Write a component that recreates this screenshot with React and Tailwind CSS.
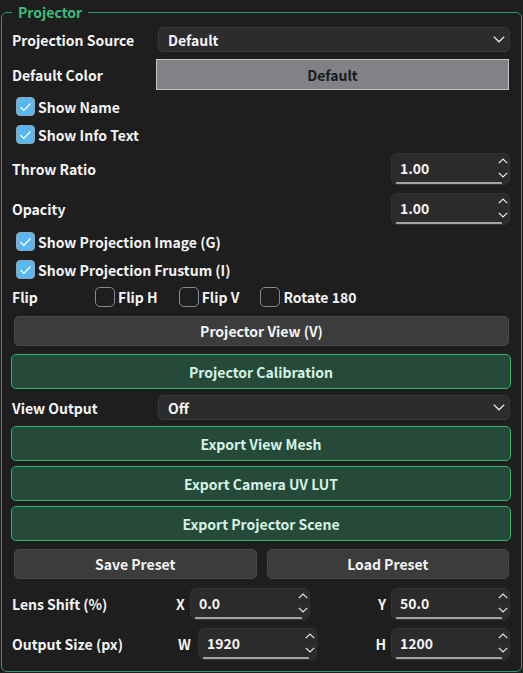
import React from "react";

function Chevron() {
  return (
    <svg width="12" height="7" viewBox="0 0 12 7" className="shrink-0">
      <polyline points="0.8,0.8 6,5.8 11.2,0.8" fill="none" stroke="#dfe6ee" strokeWidth="1.3" />
    </svg>
  );
}

function Combo({ value }) {
  return (
    <div className="flex-1 h-full flex items-center justify-between bg-[#2c2c2c] border border-[#383838] rounded-[5px] pl-[9px] pr-[4px]">
      <span>{value}</span>
      <Chevron />
    </div>
  );
}

function Spin({ value, w = "w-[119px]" }) {
  return (
    <div className={`${w} h-full flex flex-col bg-[#2b2b2b] border border-[#333333] rounded-[6px] overflow-hidden`}>
      <div className="flex-1 flex items-center justify-between pl-[8px] pr-[1px]">
        <span>{value}</span>
        <div className="flex flex-col gap-[8px] items-center">
          <svg width="10" height="6" viewBox="0 0 10 6">
            <polyline points="0.8,5.2 5,1 9.2,5.2" fill="none" stroke="#e4e8ec" strokeWidth="1.2" />
          </svg>
          <svg width="10" height="6" viewBox="0 0 10 6">
            <polyline points="0.8,0.8 5,5 9.2,0.8" fill="none" stroke="#e4e8ec" strokeWidth="1.2" />
          </svg>
        </div>
      </div>
      <div className="h-[2px] ml-[4px] mr-[7px] bg-[#a3a3a3]" />
    </div>
  );
}

function Check({ checked, label }) {
  return (
    <div className="flex items-center gap-[3px]">
      {checked ? (
        <span className="w-[19px] h-[19px] rounded-[4px] bg-[#5ab8ee] border border-[#8fa4b4] flex items-center justify-center">
          <svg width="13" height="10" viewBox="0 0 13 10">
            <polyline points="1.5,5 4.8,8.3 11.5,1.5" fill="none" stroke="#ffffff" strokeWidth="1.2" />
          </svg>
        </span>
      ) : (
        <span className="w-[20px] h-[20px] rounded-[5px] border border-[#8a8a8a]" />
      )}
      <span>{label}</span>
    </div>
  );
}

function GreenBtn({ children, mt }) {
  return (
    <div className={`${mt} -mx-[1px] h-[35px] flex items-center justify-center bg-[#254a3a] border border-[#36b36c] rounded-[5px] text-[#d6f2e4]`}>
      {children}
    </div>
  );
}

function GrayBtn({ children, className = "" }) {
  return (
    <div className={`h-[30px] flex items-center justify-center bg-[#3c3c3c] border border-[#4a4a4a] rounded-[5px] ${className}`}>
      {children}
    </div>
  );
}

export default function App() {
  return (
    <div className="w-[523px] h-[673px] bg-[#1e1e1e] pt-[2px] font-['Noto_Sans_CJK_KR',sans-serif] font-bold text-[14px] leading-[20px] text-[#f3f3f3] overflow-hidden">
      <fieldset className="ml-[1px] w-[521px] h-[670px] border border-[#2f9c67] rounded-[6px] pt-[5px] pl-[10px] pr-[11px]">
        <legend className="px-[6px] text-[14px] leading-[20px] text-[#3cbb7a]">Projector</legend>
        <div className="flex flex-col">
          <div className="h-[25px] flex items-center">
            <span className="w-[146px]">Projection Source</span>
            <Combo value="Default" />
          </div>

          <div className="mt-[7px] h-[31px] flex items-center">
            <span className="w-[144px]">Default Color</span>
            <div className="flex-1 mr-[1px] h-full flex items-center justify-center bg-[#808285] border border-[#c4c4c4] text-[#1a1a1a]">
              Default
            </div>
          </div>

          <div className="mt-[7px] h-[19px] ml-[4px] flex items-center">
            <Check checked label="Show Name" />
          </div>
          <div className="mt-[9px] h-[19px] ml-[4px] flex items-center">
            <Check checked label="Show Info Text" />
          </div>

          <div className="mt-[9px] h-[32px] flex items-center justify-between">
            <span>Throw Ratio</span>
            <Spin value="1.00" />
          </div>
          <div className="mt-[8px] h-[32px] flex items-center justify-between">
            <span>Opacity</span>
            <Spin value="1.00" />
          </div>

          <div className="mt-[7px] h-[19px] ml-[4px] flex items-center">
            <Check checked label="Show Projection Image (G)" />
          </div>
          <div className="mt-[9px] h-[19px] ml-[4px] flex items-center">
            <Check checked label="Show Projection Frustum (I)" />
          </div>

          <div className="mt-[8px] h-[20px] flex items-center">
            <span className="w-[83px]">Flip</span>
            <div className="flex items-center gap-[21px]">
              <Check label="Flip H" />
              <Check label="Flip V" />
              <Check label="Rotate 180" />
            </div>
          </div>

          <GrayBtn className="mt-[9px] ml-[2px] mr-[1px]">Projector View (V)</GrayBtn>

          <GreenBtn mt="mt-[8px]">Projector Calibration</GreenBtn>

          <div className="mt-[6px] h-[25px] flex items-center">
            <span className="w-[146px]">View Output</span>
            <Combo value="Off" />
          </div>

          <GreenBtn mt="mt-[6px]">Export View Mesh</GreenBtn>
          <GreenBtn mt="mt-[5px]">Export Camera UV LUT</GreenBtn>
          <GreenBtn mt="mt-[5px]">Export Projector Scene</GreenBtn>

          <div className="mt-[8px] flex gap-[10px] ml-[2px] mr-[1px]">
            <GrayBtn className="flex-1">Save Preset</GrayBtn>
            <GrayBtn className="flex-1">Load Preset</GrayBtn>
          </div>

          <div className="mt-[9px] h-[32px] flex items-center">
            <span className="w-[164px]">Lens Shift (%)</span>
            <span className="w-[14px]">X</span>
            <Spin value="0.0" w="w-[120px]" />
            <div className="flex-1 h-full flex items-center justify-end gap-[5px]">
              <span>Y</span>
              <Spin value="50.0" />
            </div>
          </div>

          <div className="mt-[8px] h-[32px] flex items-center">
            <span className="w-[166px]">Output Size (px)</span>
            <span className="w-[20px]">W</span>
            <Spin value="1920" />
            <div className="flex-1 h-full flex items-center justify-end gap-[5px]">
              <span>H</span>
              <Spin value="1200" />
            </div>
          </div>
        </div>
      </fieldset>
    </div>
  );
}
